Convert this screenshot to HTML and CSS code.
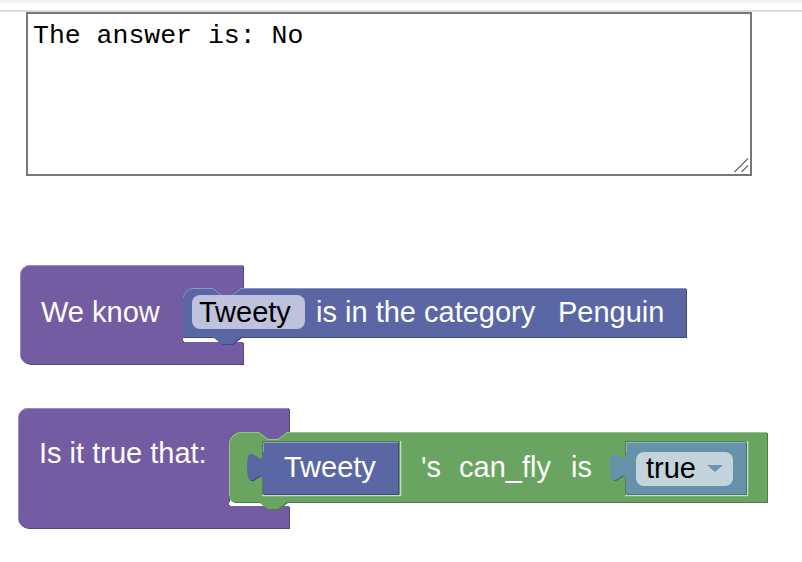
FILE: index.html
```html
<!DOCTYPE html>
<html>
<head>
<meta charset="utf-8">
<link rel="stylesheet" href="styles.css">
</head>
<body>
<div class="topbar"></div>
<div class="rule"></div>
<div class="answer-wrap">
  <textarea class="answer">The answer is: No</textarea>
  <svg class="grip" width="16" height="16" viewBox="0 0 16 16" xmlns="http://www.w3.org/2000/svg">
    <path d="M1.5,15 L15,1.5 M8.5,15 L15,8.5" stroke="#6b6b6b" stroke-width="1.3" fill="none"/>
  </svg>
</div>
<svg class="ws" width="802" height="386" viewBox="0 176 802 386" xmlns="http://www.w3.org/2000/svg">
  <!-- Block 1: We know -->
  <g class="block">
    <path class="purple-dk" transform="translate(1,1)" d="M20,275 A10,10 0 0 1 30,265 H243 V288 H241 L232,295 H222 L213,288 H193 A10,10 0 0 0 183,298 V342 H243 V364 H30 A10,10 0 0 1 20,354 Z"/>
    <path class="purple" d="M20,275 A10,10 0 0 1 30,265 H243 V288 H241 L232,295 H222 L213,288 H193 A10,10 0 0 0 183,298 V342 H243 V364 H30 A10,10 0 0 1 20,354 Z"/>
    <path class="purple-hl" d="M20.5,354 V275 A9.5,9.5 0 0 1 30,265.5 H242.5"/>
    <path class="hole-hl" d="M183,339.5 H243"/>
    <text class="lbl" x="41" y="322">We know</text>

    <path class="blue-dk" transform="translate(1,1)" d="M183,298 A10,10 0 0 1 193,288 H213 L222,295 H232 L241,288 H686 V337 H241 L232,344 H222 L213,337 H183 Z"/>
    <path class="blue" d="M183,298 A10,10 0 0 1 193,288 H213 L222,295 H232 L241,288 H686 V337 H241 L232,344 H222 L213,337 H183 Z"/>
    <path class="blue-hl" d="M183.5,298 A9.5,9.5 0 0 1 193,288.5 H213 L222,295.5 H232 L241,288.5 H685.5"/>
    <rect class="field-b" x="192" y="295" width="113" height="34" rx="8"/>
    <text class="lbl fld" x="199" y="322">Tweety</text>
    <text class="lbl" x="316" y="322">is in the category</text>
    <text class="lbl" x="558" y="322">Penguin</text>
  </g>

  <!-- Block 2: Is it true that -->
  <g class="block">
    <path class="purple-dk" transform="translate(1,1)" d="M18,418 A10,10 0 0 1 28,408 H289 V432 H287 L278,439 H268 L259,432 H239 A10,10 0 0 0 229,442 V506 H289 V528 H28 A10,10 0 0 1 18,518 Z"/>
    <path class="purple" d="M18,418 A10,10 0 0 1 28,408 H289 V432 H287 L278,439 H268 L259,432 H239 A10,10 0 0 0 229,442 V506 H289 V528 H28 A10,10 0 0 1 18,518 Z"/>
    <path class="purple-hl" d="M18.5,518 V418 A9.5,9.5 0 0 1 28,408.5 H288.5"/>
    <path class="hole-hl" d="M229,503.5 H289"/>
    <text class="lbl" x="39" y="463">Is it true that:</text>

    <path class="green-dk" transform="translate(1,1)" d="M229,444 A12,12 0 0 1 241,432 H259 L268,439 H278 L287,432 H767 V502 H287 L278,509 H268 L259,502 H235 A6,6 0 0 1 229,496 Z"/>
    <path class="green" d="M229,444 A12,12 0 0 1 241,432 H259 L268,439 H278 L287,432 H767 V502 H287 L278,509 H268 L259,502 H235 A6,6 0 0 1 229,496 Z"/>
    <path class="green-hl" d="M229.5,496 V444 A11.5,11.5 0 0 1 241,432.5 H259 L268,439.5 H278 L287,432.5 H766.5"/>

    <!-- inline input holes -->
    <path class="green-hole" d="M262,441 H400 V495 H262 Z"/>
    <path class="green-hole" d="M625,441 H747 V495 H625 Z"/>
    <path class="green-hole-hl" d="M400.5,441 V495.5 H262"/>
    <path class="green-hole-hl" d="M747.5,441 V495.5 H625"/>

    <!-- Tweety value block -->
    <path class="blue-dk" transform="translate(1,1)" d="M263,442 H398 V494 H263 V482 C263,462 247,498 247,467 C247,436 263,472 263,452 Z"/>
    <path class="blue" d="M263,442 H398 V494 H263 V482 C263,462 247,498 247,467 C247,436 263,472 263,452 Z"/>
    <path class="blue-hl" d="M263.5,452 V442.5 H397.5"/>
    <text class="lbl" x="284" y="477">Tweety</text>

    <text class="lbl" x="421" y="477">'s</text>
    <text class="lbl" x="459" y="477">can_fly</text>
    <text class="lbl" x="571" y="477">is</text>

    <!-- true value block -->
    <path class="teal-dk" transform="translate(1,1)" d="M626,442 H746 V494 H626 V482 C626,462 610,498 610,467 C610,436 626,472 626,452 Z"/>
    <path class="teal" d="M626,442 H746 V494 H626 V482 C626,462 610,498 610,467 C610,436 626,472 626,452 Z"/>
    <path class="teal-hl" d="M626.5,452 V442.5 H745.5"/>
    <rect class="field-t" x="636" y="452" width="97" height="34" rx="8"/>
    <text class="lbl fld" x="646" y="478">true</text>
    <polygon class="arrow" points="707,465 723,465 715,472"/>
  </g>
</svg>
</body>
</html>
```

FILE: styles.css
```css
body {
  margin: 0;
  background: #ffffff;
}

.topbar {
  height: 3px;
  background: #f2f2f2;
}

.rule {
  margin-top: 7px;
  height: 2px;
  background: #dcdcdc;
}

.answer-wrap {
  position: relative;
  width: 726px;
  height: 164px;
  margin-left: 26px;
}

.answer {
  display: block;
  box-sizing: border-box;
  width: 726px;
  height: 164px;
  margin: 0;
  border: 2px solid #777777;
  padding: 7px 5px 6px;
  font-family: "Liberation Mono", "Courier New", monospace;
  font-size: 26.5px;
  color: #000000;
  background: #ffffff;
  resize: none;
  outline: none;
}

.grip {
  position: absolute;
  right: 3px;
  bottom: 3px;
  display: block;
}

.ws {
  display: block;
}

.purple { fill: #745ca3; }
.purple-dk { fill: #574480; }
.purple-hl { fill: none; stroke: #9d8ac4; stroke-width: 1; }

.blue { fill: #5b67a5; }
.blue-dk { fill: #414b80; }
.blue-hl { fill: none; stroke: #8e96c6; stroke-width: 1; }

.green { fill: #69a460; }
.green-dk { fill: #4c7d46; }
.green-hl { fill: none; stroke: #98c490; stroke-width: 1; }
.green-hole { fill: #4f8249; }
.green-hole-hl { fill: none; stroke: #c2e0bd; stroke-width: 1.5; }

.teal { fill: #6592a8; }
.teal-dk { fill: #486f82; }
.teal-hl { fill: none; stroke: #93b4c6; stroke-width: 1; }

.hole-hl { fill: none; stroke: #ffffff; stroke-width: 3; }

.field-b { fill: #bec2dc; }
.field-t { fill: #c3d3dc; }
.arrow { fill: #6a95ab; }

.lbl {
  font-family: "Liberation Sans", Arial, sans-serif;
  font-size: 29px;
  fill: #ffffff;
}

.fld {
  fill: #000000;
}
```
